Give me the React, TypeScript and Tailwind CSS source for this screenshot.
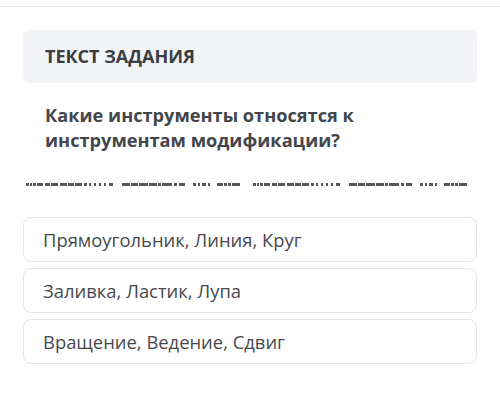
const OPTIONS = [
  "Прямоугольник, Линия, Круг",
  "Заливка, Ластик, Лупа",
  "Вращение, Ведение, Сдвиг",
];

// cut-off bottom of a hidden text line under the question: [x, width] from page x=24
const half: [number, number][] = [
  [2, 3], [6, 2], [9, 3], [13, 6], [21, 5], [27, 7],
  [36, 7], [44, 6], [51, 7], [60, 3], [65, 2], [70, 2], [75, 2], [80, 2], [85, 4],
  [98, 8], [107, 7], [115, 9], [125, 8], [134, 3], [138, 10], [150, 3], [155, 6],
  [169, 3], [174, 2], [178, 4], [184, 2], [193, 6], [200, 3], [204, 3], [208, 8],
];

const Dashes = () => {
  const marks = [...half, ...half.map(([x, w]) => [x + 227, w] as [number, number])];
  return (
    <svg width="452" height="4" viewBox="0 0 452 4" className="block" shapeRendering="crispEdges">
      {marks.map(([x, w], i) => (
        <rect key={i} x={x} y={1} width={w} height={3} fill="#55575b" />
      ))}
    </svg>
  );
};

export default function App() {
  return (
    <div
      className="w-[500px] h-[419px] bg-white overflow-hidden"
      style={{ fontFamily: '"Open Sans", "Noto Sans", sans-serif' }}
    >
      <div className="h-[7px] border-b border-[#e6e6e8]" />

      <div className="px-[23px] pt-[23px]">
        {/* HEADER */}
        <div className="h-[53px] rounded-md bg-[#f3f4f7] flex items-center px-[22px]">
          <span className="text-[18px] font-bold text-[#3a3d42]">
            ТЕКСТ ЗАДАНИЯ
          </span>
        </div>

        {/* QUESTION */}
        <div className="px-[22px] pt-[20px] text-[18.2px] leading-[25px] font-bold text-[#43464b]">
          Какие инструменты относятся к
          <br />
          инструментам модификации?
        </div>

        <div className="pt-[29px] pl-[1px]">
          <Dashes />
        </div>

        {/* OPTIONS */}
        <div className="mt-[31px] flex flex-col gap-[6px]">
          {OPTIONS.map((opt) => (
            <div
              key={opt}
              className="h-[45px] rounded-lg border border-[#e6e7ea] bg-white flex items-center px-[19px] text-[18.4px] text-[#47494e]"
            >
              {opt}
            </div>
          ))}
        </div>
      </div>
    </div>
  );
}
